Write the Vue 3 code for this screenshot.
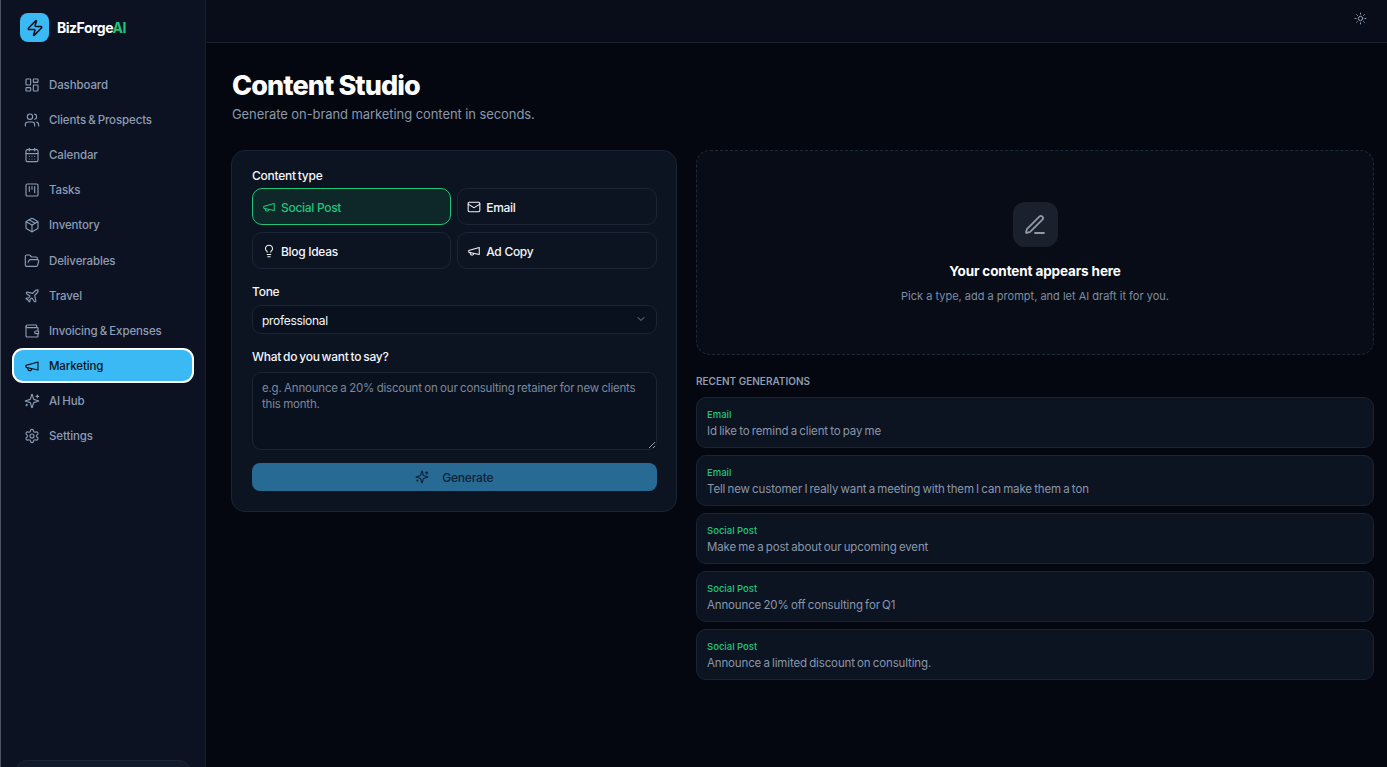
<template>
  <div class="app">
    <aside class="sidebar">
      <div class="brand">
        <div class="logo">
          <svg viewBox="0 0 24 24" class="ico logo-ico"><path d="M4 14a1 1 0 0 1-.78-1.63l9.9-10.2a.5.5 0 0 1 .86.46l-1.92 6.02A1 1 0 0 0 13 10h7a1 1 0 0 1 .78 1.63l-9.9 10.2a.5.5 0 0 1-.86-.46l1.92-6.02A1 1 0 0 0 11 14z" /></svg>
        </div>
        <span class="brand-name">BizForge<em>AI</em></span>
      </div>
      <nav class="nav">
        <a v-for="item in nav" :key="item.label" class="nav-item" :class="{ active: item.label === 'Marketing' }">
          <svg viewBox="0 0 24 24" class="ico nav-ico" v-html="item.icon"></svg>
          <span>{{ item.label }}</span>
        </a>
      </nav>
      <div class="user-box"></div>
    </aside>

    <div class="content">
      <header class="topbar">
        <svg viewBox="0 0 24 24" class="ico sun" v-html="icons.sun"></svg>
      </header>

      <main class="main">
        <h1>Content Studio</h1>
        <p class="sub">Generate on-brand marketing content in seconds.</p>

        <div class="columns">
          <form class="card" @submit.prevent>
            <label class="lbl">Content type</label>
            <div class="types">
              <button
                v-for="t in types"
                :key="t.label"
                type="button"
                class="type"
                :class="{ selected: selected === t.label }"
                @click="selected = t.label"
              >
                <svg viewBox="0 0 24 24" class="ico type-ico" v-html="t.icon"></svg>
                {{ t.label }}
              </button>
            </div>

            <label class="lbl tone-lbl">Tone</label>
            <div class="select-wrap">
              <select v-model="tone">
                <option>professional</option>
                <option>casual</option>
                <option>friendly</option>
              </select>
              <svg viewBox="0 0 24 24" class="ico chev"><path d="m6 9 6 6 6-6" /></svg>
            </div>

            <label class="lbl say-lbl">What do you want to say?</label>
            <textarea v-model="prompt" placeholder="e.g. Announce a 20% discount on our consulting retainer for new clients this month."></textarea>

            <button type="submit" class="generate" disabled>
              <svg viewBox="0 0 24 24" class="ico gen-ico" v-html="icons.sparkles"></svg>
              Generate
            </button>
          </form>

          <div class="right">
            <section class="empty">
              <div class="empty-icon">
                <svg viewBox="0 0 24 24" class="ico"><path d="M12 20h9" /><path d="M16.376 3.622a1 1 0 0 1 3.002 3.002L7.368 18.635a2 2 0 0 1-.855.506l-2.872.838a.5.5 0 0 1-.62-.62l.838-2.872a2 2 0 0 1 .506-.854z" /></svg>
              </div>
              <h3>Your content appears here</h3>
              <p>Pick a type, add a prompt, and let AI draft it for you.</p>
            </section>

            <h4>RECENT GENERATIONS</h4>
            <ul class="recent">
              <li v-for="r in recent" :key="r.text">
                <span class="r-type">{{ r.type }}</span>
                <span class="r-text">{{ r.text }}</span>
              </li>
            </ul>
          </div>
        </div>
      </main>
    </div>
  </div>
</template>

<script setup>
import { ref } from 'vue'

const icons = {
  dashboard: '<rect x="3" y="3" width="7" height="9" rx="1"/><rect x="14" y="3" width="7" height="5" rx="1"/><rect x="14" y="12" width="7" height="9" rx="1"/><rect x="3" y="16" width="7" height="5" rx="1"/>',
  users: '<path d="M16 21v-2a4 4 0 0 0-4-4H6a4 4 0 0 0-4 4v2"/><circle cx="9" cy="7" r="4"/><path d="M22 21v-2a4 4 0 0 0-3-3.87"/><path d="M16 3.13a4 4 0 0 1 0 7.75"/>',
  calendar: '<path d="M8 2v4"/><path d="M16 2v4"/><rect x="3" y="4" width="18" height="18" rx="2"/><path d="M3 10h18"/><path d="M8 14h.01"/><path d="M12 14h.01"/><path d="M16 14h.01"/><path d="M8 18h.01"/><path d="M12 18h.01"/><path d="M16 18h.01"/>',
  kanban: '<rect x="3" y="3" width="18" height="18" rx="2"/><path d="M8 7v7"/><path d="M12 7v4"/><path d="M16 7v9"/>',
  box: '<path d="M11 21.73a2 2 0 0 0 2 0l7-4A2 2 0 0 0 21 16V8a2 2 0 0 0-1-1.73l-7-4a2 2 0 0 0-2 0l-7 4A2 2 0 0 0 3 8v8a2 2 0 0 0 1 1.73z"/><path d="M12 22V12"/><path d="M3.29 7 12 12l8.71-5"/><path d="m7.5 4.27 9 5.15"/>',
  folder: '<path d="m6 14 1.5-2.9A2 2 0 0 1 9.24 10H20a2 2 0 0 1 1.94 2.5l-1.54 6a2 2 0 0 1-1.95 1.5H4a2 2 0 0 1-2-2V5a2 2 0 0 1 2-2h3.9a2 2 0 0 1 1.69.9l.81 1.2a2 2 0 0 0 1.67.9H18a2 2 0 0 1 2 2v2"/>',
  plane: '<path d="M17.8 19.2 16 11l3.5-3.5C21 6 21.5 4 21 3c-1-.5-3 0-4.5 1.5L13 8 4.8 6.2c-.5-.1-.9.1-1.1.5l-.3.5c-.2.5-.1 1 .3 1.3L9 12l-2 3H4l-1 1 3 2 2 3 1-1v-3l3-2 3.5 5.3c.3.4.8.5 1.3.3l.5-.2c.4-.3.6-.7.5-1.2z"/>',
  wallet: '<path d="M19 7V4a1 1 0 0 0-1-1H5a2 2 0 0 0 0 4h15a1 1 0 0 1 1 1v4h-3a2 2 0 0 0 0 4h3a1 1 0 0 0 1-1v-2a1 1 0 0 0-1-1"/><path d="M3 5v14a2 2 0 0 0 2 2h15a1 1 0 0 0 1-1v-4"/>',
  megaphone: '<path d="m3 11 18-5v12L3 14v-3z"/><path d="M11.6 16.8a3 3 0 1 1-5.8-1.6"/>',
  sparkles: '<path d="M9.937 15.5A2 2 0 0 0 8.5 14.063l-6.135-1.582a.5.5 0 0 1 0-.962L8.5 9.936A2 2 0 0 0 9.937 8.5l1.582-6.135a.5.5 0 0 1 .963 0L14.063 8.5A2 2 0 0 0 15.5 9.937l6.135 1.581a.5.5 0 0 1 0 .964L15.5 14.063a2 2 0 0 0-1.437 1.437l-1.582 6.135a.5.5 0 0 1-.963 0z"/><path d="M20 3v4"/><path d="M22 5h-4"/><path d="M4 17v2"/><path d="M5 18H3"/>',
  settings: '<path d="M12.22 2h-.44a2 2 0 0 0-2 2v.18a2 2 0 0 1-1 1.73l-.43.25a2 2 0 0 1-2 0l-.15-.08a2 2 0 0 0-2.73.73l-.22.38a2 2 0 0 0 .73 2.73l.15.1a2 2 0 0 1 1 1.72v.51a2 2 0 0 1-1 1.74l-.15.09a2 2 0 0 0-.73 2.73l.22.38a2 2 0 0 0 2.73.73l.15-.08a2 2 0 0 1 2 0l.43.25a2 2 0 0 1 1 1.73V20a2 2 0 0 0 2 2h.44a2 2 0 0 0 2-2v-.18a2 2 0 0 1 1-1.73l.43-.25a2 2 0 0 1 2 0l.15.08a2 2 0 0 0 2.73-.73l.22-.39a2 2 0 0 0-.73-2.73l-.15-.08a2 2 0 0 1-1-1.74v-.5a2 2 0 0 1 1-1.74l.15-.09a2 2 0 0 0 .73-2.73l-.22-.38a2 2 0 0 0-2.73-.73l-.15.08a2 2 0 0 1-2 0l-.43-.25a2 2 0 0 1-1-1.73V4a2 2 0 0 0-2-2z"/><circle cx="12" cy="12" r="3"/>',
  mail: '<rect x="2" y="4" width="20" height="16" rx="2"/><path d="m22 7-8.97 5.7a1.94 1.94 0 0 1-2.06 0L2 7"/>',
  bulb: '<path d="M15 14c.2-1 .7-1.7 1.5-2.5 1-.9 1.5-2.2 1.5-3.5A6 6 0 0 0 6 8c0 1 .2 2.2 1.5 3.5.7.7 1.3 1.5 1.5 2.5"/><path d="M9 18h6"/><path d="M10 22h4"/>',
  sun: '<circle cx="12" cy="12" r="4"/><path d="M12 2v2"/><path d="M12 20v2"/><path d="m4.93 4.93 1.41 1.41"/><path d="m17.66 17.66 1.41 1.41"/><path d="M2 12h2"/><path d="M20 12h2"/><path d="m6.34 17.66-1.41 1.41"/><path d="m19.07 4.93-1.41 1.41"/>'
}

const nav = [
  { label: 'Dashboard', icon: icons.dashboard },
  { label: 'Clients & Prospects', icon: icons.users },
  { label: 'Calendar', icon: icons.calendar },
  { label: 'Tasks', icon: icons.kanban },
  { label: 'Inventory', icon: icons.box },
  { label: 'Deliverables', icon: icons.folder },
  { label: 'Travel', icon: icons.plane },
  { label: 'Invoicing & Expenses', icon: icons.wallet },
  { label: 'Marketing', icon: icons.megaphone },
  { label: 'AI Hub', icon: icons.sparkles },
  { label: 'Settings', icon: icons.settings }
]

const types = [
  { label: 'Social Post', icon: icons.megaphone },
  { label: 'Email', icon: icons.mail },
  { label: 'Blog Ideas', icon: icons.bulb },
  { label: 'Ad Copy', icon: icons.megaphone }
]

const recent = [
  { type: 'Email', text: 'Id like to remind a client to pay me' },
  { type: 'Email', text: 'Tell new customer I really want a meeting with them I can make them a ton' },
  { type: 'Social Post', text: 'Make me a post about our upcoming event' },
  { type: 'Social Post', text: 'Announce 20% off consulting for Q1' },
  { type: 'Social Post', text: 'Announce a limited discount on consulting.' }
]

const selected = ref('Social Post')
const tone = ref('professional')
const prompt = ref('')
</script>

<style>
html, body {
  margin: 0;
  height: 100%;
  overflow: hidden;
  background: #04070f;
}
</style>

<style scoped>
* {
  box-sizing: border-box;
}

.app {
  display: flex;
  height: 767px;
  overflow: hidden;
  font-family: Inter, "Noto Sans", sans-serif;
  color: #f4f6fa;
  background: #04070f;
}

.ico {
  fill: none;
  stroke: currentColor;
  stroke-width: 2;
  stroke-linecap: round;
  stroke-linejoin: round;
  flex: none;
}

.sidebar {
  width: 206px;
  flex: none;
  height: 767px;
  overflow: hidden;
  background: #0c1221;
  border-left: 1px solid #4a5560;
  border-right: 1px solid #161e2c;
  display: flex;
  flex-direction: column;
}

.brand {
  height: 54px;
  flex: none;
  display: flex;
  align-items: center;
  gap: 8px;
  padding: 0 0 0 19px;
  margin-bottom: 1px;
}

.logo {
  width: 29px;
  height: 29px;
  margin-top: 1px;
  border-radius: 8px;
  background: #3bb9f5;
  display: flex;
  align-items: center;
  justify-content: center;
  color: #0b1220;
}

.logo-ico {
  width: 18px;
  height: 18px;
}

.brand-name {
  font-size: 14px;
  font-weight: 700;
  letter-spacing: -0.5px;
  color: #fff;
}

.brand-name em {
  font-style: normal;
  color: #21c47b;
}

.nav {
  flex: 0 0 705px;
  display: flex;
  flex-direction: column;
  gap: 3.95px;
  padding: 14.3px 13px 0;
}

.nav-item {
  height: 31.2px;
  flex: none;
  display: flex;
  align-items: center;
  gap: 9px;
  padding: 0 10px;
  border-radius: 9px;
  font-size: 11.5px;
  font-weight: 500;
  letter-spacing: -0.12px;
  word-spacing: -0.8px;
  color: #8d9db5;
}

.nav-ico {
  width: 16px;
  height: 16px;
  stroke-width: 1.7;
}

.nav-item.active {
  background: #3bb9f5;
  color: #0b1220;
  box-shadow: 0 0 0 2px #fff;
}

.user-box {
  flex: none;
  height: 60px;
  margin: 0 14px;
  border: 1px solid #1c2536;
  border-radius: 12px;
  background: #111a2a;
}

.content {
  flex: 1;
  min-width: 0;
}

.topbar {
  height: 43px;
  display: flex;
  align-items: center;
  justify-content: flex-end;
  padding: 0 20px 6px 0;
  background: #080d19;
  border-bottom: 1px solid #1a2230;
}

.sun {
  width: 13px;
  height: 13px;
  color: #98a5b8;
  stroke-width: 1.8;
}

.main {
  padding: 24px 13px 0 25px;
}

h1 {
  margin: 0 0 0 1px;
  font-size: 27px;
  line-height: 38px;
  font-weight: 800;
  letter-spacing: -0.9px;
  color: #fff;
}

.sub {
  margin: 0 0 0 1px;
  font-size: 13px;
  line-height: 18px;
  letter-spacing: -0.08px;
  color: #8a97aa;
}

.columns {
  display: grid;
  grid-template-columns: 446px 678px;
  gap: 19px;
  margin-top: 27px;
  align-items: start;
}

.card {
  background: #0c1321;
  border: 1px solid #1b2434;
  border-radius: 14px;
  padding: 18px 19.5px 20px 20px;
  display: flex;
  flex-direction: column;
}

.lbl {
  font-size: 12px;
  line-height: 14px;
  font-weight: 500;
  letter-spacing: -0.25px;
  word-spacing: -1px;
  color: #f4f6fa;
  margin-bottom: 5px;
}

.types {
  display: grid;
  grid-template-columns: 1fr 1fr;
  gap: 7px 6px;
}

.type {
  height: 37px;
  display: flex;
  align-items: center;
  gap: 5px;
  padding: 1px 9px 0;
  background: transparent;
  border: 1px solid #1c2536;
  border-radius: 10px;
  color: #f4f6fa;
  font: 500 12px Inter, "Noto Sans", sans-serif;
  letter-spacing: -0.3px;
  cursor: pointer;
}

.type-ico {
  width: 14px;
  height: 14px;
  stroke-width: 1.8;
}

.type.selected {
  background: #0e2829;
  border-color: #21c47b;
  color: #21c47b;
}

.tone-lbl {
  margin-top: 16px;
  margin-bottom: 6px;
}

.select-wrap {
  position: relative;
}

select {
  display: block;
  width: 100%;
  height: 28.5px;
  appearance: none;
  padding: 2px 9px 0;
  background: #0a111e;
  border: 1px solid #1c2536;
  border-radius: 9px;
  color: #f4f6fa;
  font: 400 12px Inter, "Noto Sans", sans-serif;
  letter-spacing: -0.3px;
}

.chev {
  position: absolute;
  top: 8px;
  right: 10px;
  width: 12px;
  height: 12px;
  color: #7c8798;
}

.say-lbl {
  margin-top: 16px;
  margin-bottom: 8px;
}

textarea {
  width: 100%;
  height: 78px;
  padding: 7px 9px;
  background: #0a111e;
  border: 1px solid #1c2536;
  border-radius: 9px;
  color: #f4f6fa;
  font: 400 11.5px/16px Inter, "Noto Sans", sans-serif;
  letter-spacing: -0.2px;
  word-spacing: -0.5px;
  outline: none;
}

textarea::placeholder {
  color: #7a889c;
  opacity: 1;
}

.generate {
  margin-top: 13px;
  height: 28px;
  padding: 1px 0 0;
  border: none;
  border-radius: 8px;
  background: #276a93;
  color: #0e2238;
  font: 500 12px Inter, "Noto Sans", sans-serif;
  letter-spacing: -0.2px;
  display: flex;
  align-items: center;
  justify-content: center;
  gap: 13px;
}

.gen-ico {
  width: 14px;
  height: 14px;
}

.right {
  min-width: 0;
}

.empty {
  height: 205px;
  border: 1px dashed #1f2938;
  border-radius: 14px;
  background: #070c16;
  display: flex;
  flex-direction: column;
  align-items: center;
  padding-top: 51px;
}

.empty-icon {
  width: 45px;
  height: 45px;
  border-radius: 12px;
  background: #1a212d;
  display: flex;
  align-items: center;
  justify-content: center;
  color: #8e99a9;
}

.empty-icon svg {
  width: 24px;
  height: 24px;
  stroke-width: 1.8;
}

.empty h3 {
  margin: 15px 0 0;
  font-size: 13.5px;
  line-height: 18px;
  font-weight: 700;
  letter-spacing: -0.12px;
  color: #fff;
}

.empty p {
  margin: 9px 0 0;
  font-size: 11px;
  line-height: 15px;
  color: #7f8ea3;
}

h4 {
  margin: 20px 0 10px;
  font-size: 10px;
  line-height: 12px;
  font-weight: 600;
  color: #8e9bae;
}

.recent {
  list-style: none;
  margin: 0;
  padding: 0;
  display: flex;
  flex-direction: column;
  gap: 7px;
}

.recent li {
  height: 51px;
  padding: 9.5px 10px 0;
  background: #0c1321;
  border: 1px solid #1b2434;
  border-radius: 10px;
  display: flex;
  flex-direction: column;
}

.r-type {
  font-size: 9.5px;
  line-height: 14.5px;
  font-weight: 500;
  color: #21c47b;
}

.r-text {
  font-size: 11.5px;
  line-height: 18px;
  letter-spacing: -0.14px;
  word-spacing: -0.8px;
  color: #8a97aa;
}
</style>
